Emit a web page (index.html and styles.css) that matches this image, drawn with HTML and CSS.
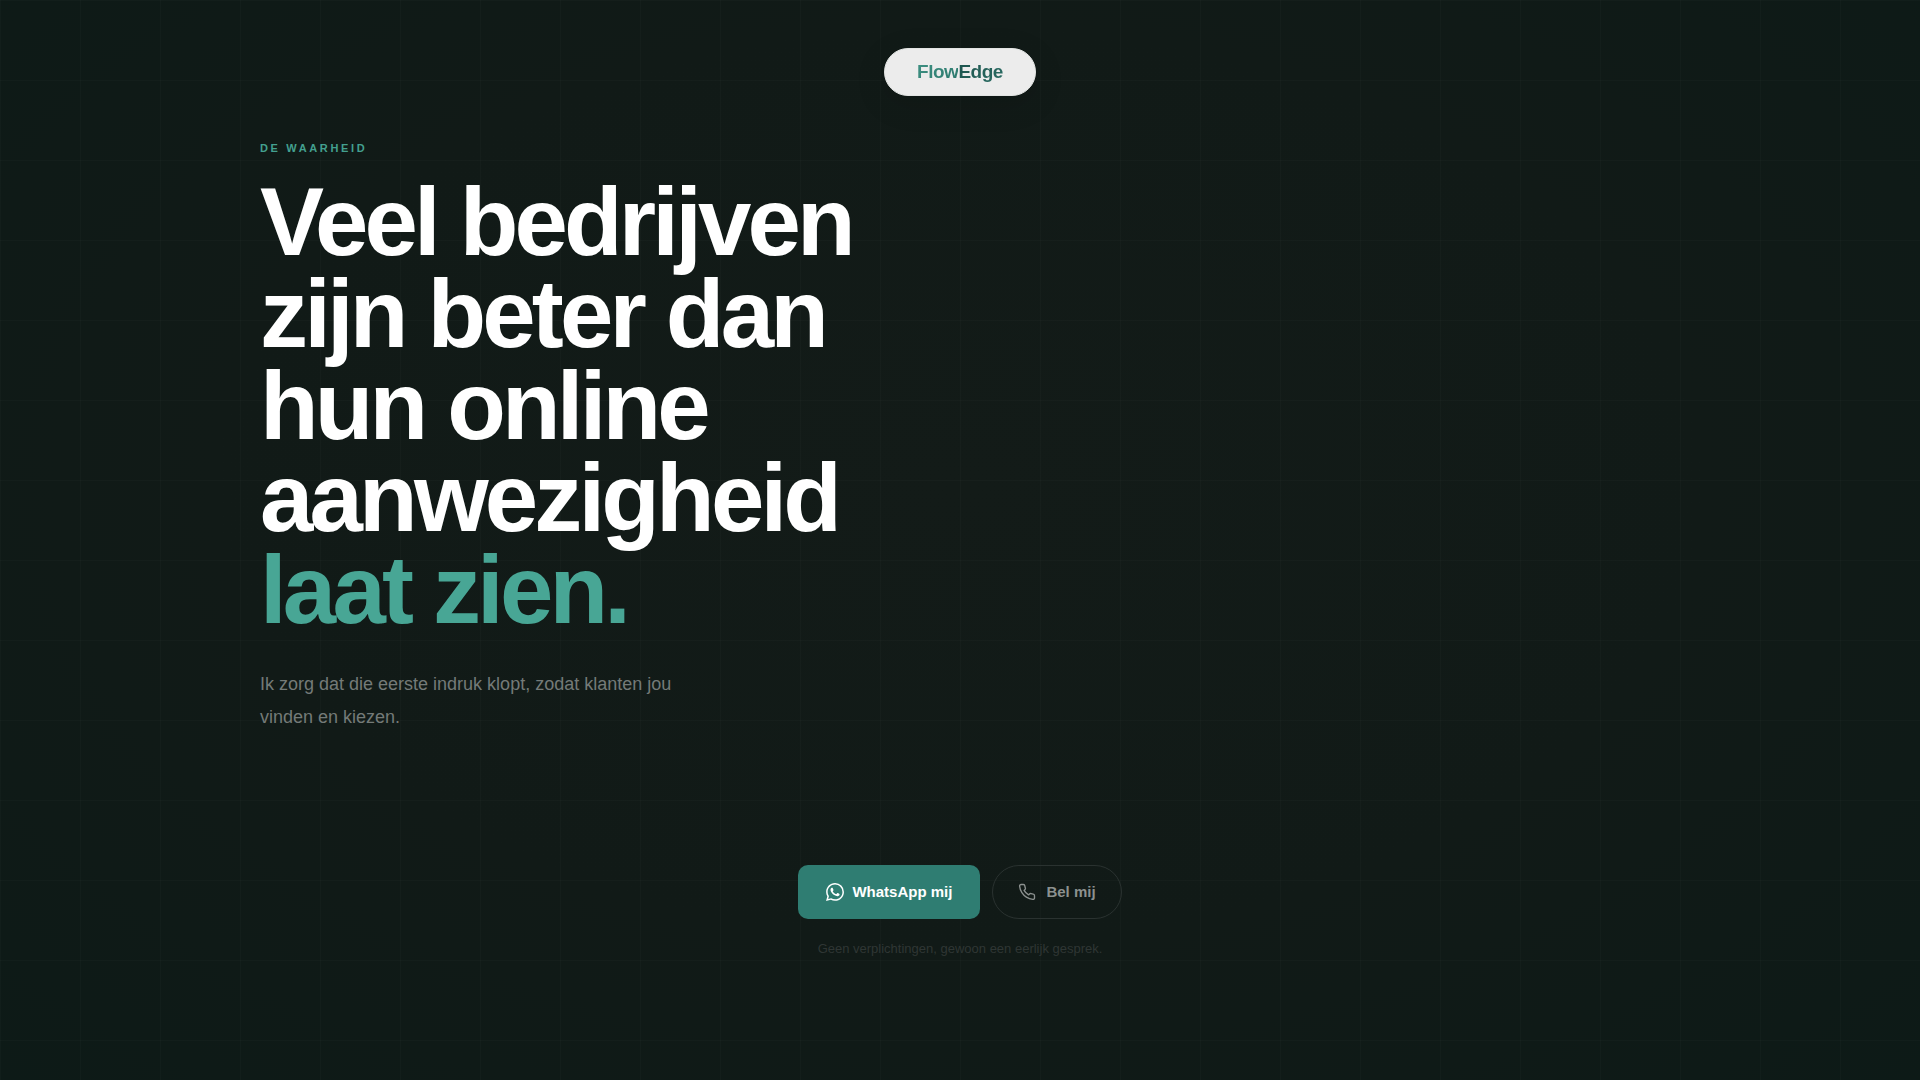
FILE: index.html
```html
<!DOCTYPE html>
<html lang="nl">
<head>
    <meta charset="UTF-8">
    <meta name="viewport" content="width=device-width, initial-scale=1.0">
    <title>FlowEdge</title>
    <link rel="stylesheet" href="styles.css">
</head>
<body>
    <header class="header">
        <a href="#" class="logo"><span class="logo-flow">Flow</span><span class="logo-edge">Edge</span></a>
    </header>

    <main class="main">
        <section class="hero">
            <p class="eyebrow">De waarheid</p>
            <h1>Veel bedrijven zijn beter dan hun online aanwezigheid <span class="accent">laat zien.</span></h1>
            <p class="intro">Ik zorg dat die eerste indruk klopt, zodat klanten jou vinden en kiezen.</p>
        </section>

        <section class="contact">
            <div class="actions">
                <a href="#whatsapp" class="btn btn-primary">
                    <svg class="icon" viewBox="0 0 24 24" fill="currentColor" aria-hidden="true">
                        <path d="M17.472 14.382c-.297-.149-1.758-.867-2.03-.967-.273-.099-.471-.148-.67.15-.197.297-.767.966-.94 1.164-.173.199-.347.223-.644.075-.297-.15-1.255-.463-2.39-1.475-.883-.788-1.48-1.761-1.653-2.059-.173-.297-.018-.458.13-.606.134-.133.298-.347.446-.52.149-.174.198-.298.298-.497.099-.198.05-.371-.025-.52-.075-.149-.669-1.612-.916-2.207-.242-.579-.487-.5-.669-.51-.173-.008-.371-.01-.57-.01-.198 0-.52.074-.792.372-.272.297-1.04 1.016-1.04 2.479 0 1.462 1.065 2.875 1.213 3.074.149.198 2.096 3.2 5.077 4.487.709.306 1.262.489 1.694.625.712.227 1.36.195 1.871.118.571-.085 1.758-.719 2.006-1.413.248-.694.248-1.289.173-1.413-.074-.124-.272-.198-.57-.347m-5.421 7.403h-.004a9.87 9.87 0 01-5.031-1.378l-.361-.214-3.741.982.998-3.648-.235-.374a9.86 9.86 0 01-1.51-5.26c.001-5.45 4.436-9.884 9.888-9.884 2.64 0 5.122 1.03 6.988 2.898a9.825 9.825 0 012.893 6.994c-.003 5.45-4.437 9.884-9.885 9.884m8.413-18.297A11.815 11.815 0 0012.05 0C5.495 0 .16 5.335.157 11.892c0 2.096.547 4.142 1.588 5.945L.057 24l6.305-1.654a11.882 11.882 0 005.683 1.448h.005c6.554 0 11.89-5.335 11.893-11.893a11.821 11.821 0 00-3.48-8.413z"/>
                    </svg>
                    WhatsApp mij
                </a>
                <a href="#bel" class="btn btn-outline">
                    <svg class="icon" viewBox="0 0 24 24" fill="none" stroke="currentColor" stroke-width="1.8" stroke-linecap="round" stroke-linejoin="round" aria-hidden="true">
                        <path d="M22 16.92v3a2 2 0 0 1-2.18 2 19.79 19.79 0 0 1-8.63-3.07 19.5 19.5 0 0 1-6-6 19.79 19.79 0 0 1-3.07-8.67A2 2 0 0 1 4.11 2h3a2 2 0 0 1 2 1.72 12.84 12.84 0 0 0 .7 2.81 2 2 0 0 1-.45 2.11L8.09 9.91a16 16 0 0 0 6 6l1.27-1.27a2 2 0 0 1 2.11-.45 12.84 12.84 0 0 0 2.81.7A2 2 0 0 1 22 16.92z"/>
                    </svg>
                    Bel mij
                </a>
            </div>
            <p class="note">Geen verplichtingen, gewoon een eerlijk gesprek.</p>
        </section>
    </main>
</body>
</html>
```

FILE: styles.css
```css
* {
    margin: 0;
    padding: 0;
    box-sizing: border-box;
}

body {
    font-family: "Liberation Sans", Arial, sans-serif;
    min-height: 100vh;
    color: #fff;
    /* faint 80px grid over a soft radial glow */
    background:
        linear-gradient(rgba(255, 255, 255, 0.015) 1px, transparent 1px) 0 0 / 80px 80px,
        linear-gradient(90deg, rgba(255, 255, 255, 0.015) 1px, transparent 1px) 0 0 / 80px 80px,
        radial-gradient(ellipse at 50% 45%, #131b18 0%, #111a17 55%, #0d1a17 100%);
}

a {
    text-decoration: none;
}

.header {
    display: flex;
    justify-content: center;
    padding-top: 48px;
}

.logo {
    display: flex;
    align-items: center;
    height: 48px;
    padding: 0 32px;
    border: 1px solid #e2e4e3;
    border-radius: 24px;
    background: #ececec;
    box-shadow: 0 8px 32px rgba(0, 0, 0, 0.12);
    font-size: 19px;
    font-weight: 700;
    letter-spacing: -0.025em;
}

.logo-flow,
.logo-edge {
    background: linear-gradient(135deg, #3f9183, #2b776c);
    background-clip: text;
    -webkit-background-clip: text;
    color: transparent;
}

.logo-edge {
    background-image: linear-gradient(135deg, #1c524c, #2b6d64);
}

.main {
    max-width: 1400px;
    margin: 0 auto;
    padding: 46px 0 64px;
}

.eyebrow {
    margin-bottom: 22px;
    color: #43a08f;
    font-size: 11px;
    font-weight: 700;
    line-height: 12px;
    letter-spacing: 0.24em;
    text-transform: uppercase;
}

h1 {
    max-width: 700px;
    font-size: 96px;
    font-weight: 700;
    line-height: 92px;
    letter-spacing: -0.04em;
}

.accent {
    display: block;
    color: #48a695;
}

.intro {
    max-width: 440px;
    margin-top: 32px;
    color: #747a78;
    font-size: 18px;
    line-height: 33px;
}

.contact {
    margin-top: 131px;
    text-align: center;
}

.actions {
    display: flex;
    flex-wrap: wrap;
    justify-content: center;
    gap: 12px;
}

.btn {
    display: flex;
    align-items: center;
    gap: 8px;
    height: 54px;
    font-size: 15px;
    font-weight: 700;
    line-height: 16px;
}

.btn-primary {
    padding: 0 28px;
    border-radius: 10px;
    background: #2f7d72;
    color: #fff;
}

.btn-outline {
    gap: 10px;
    padding: 0 25px;
    border: 1px solid #2a3230;
    border-radius: 27px;
    color: #8c918f;
}

.icon {
    width: 18px;
    height: 18px;
}

.note {
    margin-top: 22px;
    color: #2f3634;
    font-size: 13px;
    line-height: 16px;
}
```
